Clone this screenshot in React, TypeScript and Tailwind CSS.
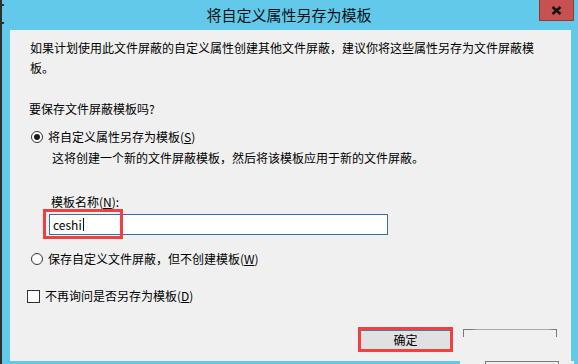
import React from 'react'

const FONT = { fontFamily: '"Noto Sans CJK SC", "Microsoft YaHei", sans-serif' }

function Radio({ checked }: { checked?: boolean }) {
  return (
    <span className="w-[12px] h-[12px] rounded-full border border-[#333] bg-white flex items-center justify-center flex-shrink-0">
      {checked && <span className="w-[6px] h-[6px] rounded-full bg-[#1a1a1a]" />}
    </span>
  )
}

export default function App() {
  return (
    <div
      className="relative w-[578px] h-[364px] overflow-hidden bg-[#62C9EA] border-l-2 border-[#2e2e2e] text-[12px] text-black"
      style={FONT}
    >
      {/* ticks on the left edge */}
      <span className="absolute left-0 top-[4px] w-[2px] h-[2px] bg-[#2e2e2e]" />
      <span className="absolute left-0 top-[22px] w-[2px] h-[2px] bg-[#2e2e2e]" />

      {/* Title bar */}
      <div className="h-[30px] flex items-center justify-center text-[15px] text-[#111] -ml-[2px]">
        将自定义属性另存为模板
      </div>
      <button className="absolute top-0 left-[537px] w-[35px] h-[21px] bg-[#C75050] border border-[#8E3B36] border-t-0 flex items-center justify-center">
        <svg width="11" height="9" viewBox="0 0 11 9">
          <path d="M1.5 1 L9.5 8 M9.5 1 L1.5 8" stroke="#111" strokeWidth="2.4" />
        </svg>
      </button>

      {/* Dialog body */}
      <div className="ml-[8px] mr-[7px] h-[331px] bg-[#F0F0F0] pl-[20px] leading-[20px]">
        <p className="pt-[8px] pr-[18px]">
          如果计划使用此文件屏蔽的自定义属性创建其他文件屏蔽，建议你将这些属性另存为文件屏蔽模板。
        </p>
        <p className="mt-[21px] -ml-[1px]">要保存文件屏蔽模板吗?</p>

        <div className="mt-[8px] flex items-center gap-[5px] ml-[1px]">
          <Radio checked />
          <span>将自定义属性另存为模板(<span className="underline">S</span>)</span>
        </div>
        <p className="mt-[1px] pl-[22px]">这将创建一个新的文件屏蔽模板，然后将该模板应用于新的文件屏蔽。</p>

        <p className="mt-[24px] pl-[21px]">模板名称(<span className="underline">N</span>):</p>
        <div className="relative mt-[2px] ml-[19px] w-[339px] h-[21px] bg-white border border-[#3A6E9C] flex items-center pl-[3px]">
          <span className="leading-none">ceshi</span>
          <span className="w-px h-[13px] bg-[#111] ml-[1px]" />
          <span className="absolute -left-[7px] -top-[6px] w-[80px] h-[30px] border-[3px] border-[#F04040]" />
        </div>

        <div className="mt-[14px] flex items-center gap-[5px] ml-[1px]">
          <Radio />
          <span>保存自定义文件屏蔽，但不创建模板(<span className="underline">W</span>)</span>
        </div>

        <div className="mt-[17px] flex items-center gap-[5px] -ml-[3px]">
          <span className="w-[13px] h-[13px] border border-[#333] bg-white flex-shrink-0" />
          <span>不再询问是否另存为模板(<span className="underline">D</span>)</span>
        </div>

        <div className="mt-[21px] flex justify-end gap-[10px] pr-[14px]">
          <div className="w-[95px] h-[25px] border-[3px] border-[#F04040] bg-[#E1E1E1] flex items-center justify-center">
            <div className="w-full h-full border-t border-[#3C7FB1] flex items-center justify-center">确定</div>
          </div>
          <div className="w-[94px] h-[25px] mt-[2px] relative">
            <div className="absolute inset-x-0 top-0 h-[8px] border-t border-x border-[#7A7A7A]" />
            <div className="absolute left-[12px] right-[6px] top-[1px] h-[10px] bg-[#F0F0F0] blur-[2px]" />
          </div>
        </div>
      </div>

      {/* bottom edge artifact */}
      <div className="absolute left-[458px] top-[361px] w-[114px] h-[3px] bg-[#F0F0F0]">
        <div className="ml-[25px] w-[74px] h-[3px] border-t border-x border-[#7A7A7A]" />
      </div>
    </div>
  )
}
